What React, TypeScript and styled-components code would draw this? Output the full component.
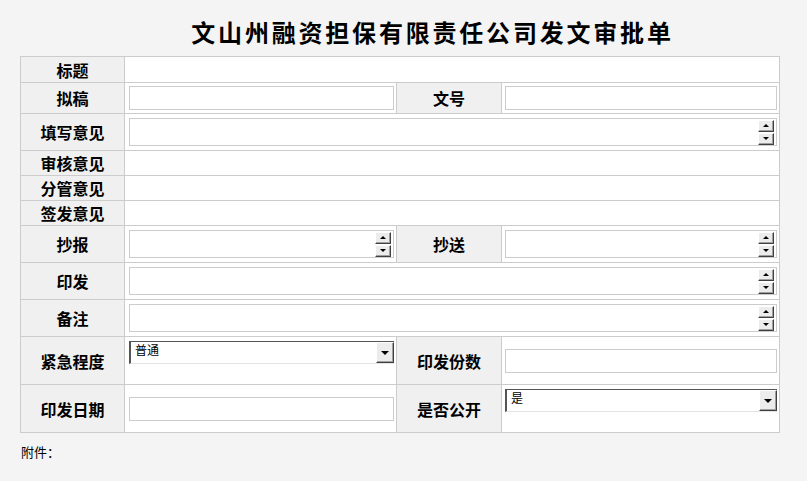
import styled, { createGlobalStyle } from "styled-components";

const GlobalStyle = createGlobalStyle`
  html, body {
    margin: 0;
    padding: 0;
    background: #f4f4f4;
  }
  body {
    font-family: "Liberation Sans", "Noto Sans CJK SC", sans-serif;
    color: #000;
  }
`;

const Page = styled.div`
  width: 807px;
  min-height: 481px;
  background: #f4f4f4;
  box-sizing: border-box;
`;

const Title = styled.h1`
  margin: 0;
  padding: 14px 0 0 58px;
  height: 56px;
  box-sizing: border-box;
  text-align: center;
  font-family: "Noto Sans CJK SC", sans-serif;
  font-size: 24px;
  line-height: 36px;
  font-weight: 700;
  letter-spacing: 2.8px;
`;

const Sheet = styled.div`
  margin-left: 20px;
  width: 760px;
  box-sizing: border-box;
  display: grid;
  grid-template-columns: 104px 272px 105px 278px;
  grid-template-rows: 26px 31px 37px 25px 25px 25px 37px 37px 37px 48px 48px;
  border-top: 1px solid #cccccc;
  border-left: 1px solid #cccccc;
`;

const Cell = styled.div<{ $span?: number; $top?: boolean; $right?: boolean }>`
  box-sizing: border-box;
  display: flex;
  align-items: ${(p) => (p.$top ? "flex-start" : "center")};
  grid-column: span ${(p) => p.$span ?? 1};
  border-right: 1px solid #cccccc;
  border-bottom: 1px solid #cccccc;
  background: #ffffff;
  padding: ${(p) => (p.$top ? "4px" : "0")} 2px 0 ${(p) => (p.$right ? "3px" : "4px")};
  min-width: 0;
`;

const Label = styled.div`
  box-sizing: border-box;
  display: flex;
  align-items: center;
  justify-content: center;
  border-right: 1px solid #cccccc;
  border-bottom: 1px solid #cccccc;
  background: #f0f0f0;
  font-family: "Noto Sans CJK SC", sans-serif;
  font-size: 16px;
  font-weight: 700;
`;

const TextInput = styled.input`
  box-sizing: border-box;
  width: 100%;
  height: 24px;
  margin: 0;
  padding: 0 3px;
  border: 1px solid #cccccc;
  background: #ffffff;
  outline: none;
`;

const MemoBox = styled.div`
  box-sizing: border-box;
  width: 100%;
  height: 28px;
  display: flex;
  align-items: center;
  border: 1px solid #cccccc;
  background: #ffffff;
  padding-right: 2px;
`;

const Memo = styled.textarea`
  flex: 1;
  height: 100%;
  border: none;
  resize: none;
  outline: none;
  padding: 0;
  background: transparent;
`;

const SpinColumn = styled.div`
  display: flex;
  flex-direction: column;
  gap: 1px;
`;

const Raised = styled.div`
  box-sizing: border-box;
  display: flex;
  align-items: center;
  justify-content: center;
  background: #ececec;
  border-top: 1px solid #ffffff;
  border-left: 1px solid #ffffff;
  border-right: 1px solid #404040;
  border-bottom: 1px solid #404040;
  box-shadow: inset -1px -1px 0 #a0a0a0;
`;

const SpinButton = styled(Raised)`
  width: 16px;
  height: 12px;
`;

const Arrow = styled.span<{ $up?: boolean; $half: number; $tall: number }>`
  width: 0;
  height: 0;
  border-left: ${(p) => p.$half}px solid transparent;
  border-right: ${(p) => p.$half}px solid transparent;
  ${(p) =>
    p.$up
      ? `border-bottom: ${p.$tall}px solid #000;`
      : `border-top: ${p.$tall}px solid #000;`}
`;

const SelectBox = styled.div`
  box-sizing: border-box;
  width: 100%;
  height: 23px;
  display: flex;
  align-items: stretch;
  background: #ffffff;
  border-top: 1px solid #555555;
  border-left: 2px solid #555555;
  border-bottom: 1px solid #e4e4e4;
`;

const SelectValue = styled.span`
  flex: 1;
  padding: 0 0 0 4px;
  font-family: "Noto Sans CJK SC", sans-serif;
  font-size: 12px;
  line-height: 15px;
`;

const DropButton = styled(Raised)`
  width: 18px;
  height: 21px;
`;

const Note = styled.div`
  padding: 10px 0 0 21px;
  font-family: "Noto Sans CJK SC", sans-serif;
  font-size: 13px;
  line-height: 18px;
`;

const Spin = () => (
  <SpinColumn>
    <SpinButton>
      <Arrow $up $half={3} $tall={3} />
    </SpinButton>
    <SpinButton>
      <Arrow $half={3} $tall={3} />
    </SpinButton>
  </SpinColumn>
);

const MemoField = () => (
  <MemoBox>
    <Memo />
    <Spin />
  </MemoBox>
);

const Select = ({ value }: { value: string }) => (
  <SelectBox>
    <SelectValue>{value}</SelectValue>
    <DropButton>
      <Arrow $half={4} $tall={4} />
    </DropButton>
  </SelectBox>
);

export default function App() {
  return (
    <Page>
      <GlobalStyle />
      <Title>文山州融资担保有限责任公司发文审批单</Title>
      <Sheet>
        <Label>标题</Label>
        <Cell $span={3} />

        <Label>拟稿</Label>
        <Cell>
          <TextInput />
        </Cell>
        <Label>文号</Label>
        <Cell $right>
          <TextInput />
        </Cell>

        <Label>填写意见</Label>
        <Cell $span={3}>
          <MemoField />
        </Cell>

        <Label>审核意见</Label>
        <Cell $span={3} />
        <Label>分管意见</Label>
        <Cell $span={3} />
        <Label>签发意见</Label>
        <Cell $span={3} />

        <Label>抄报</Label>
        <Cell>
          <MemoField />
        </Cell>
        <Label>抄送</Label>
        <Cell $right>
          <MemoField />
        </Cell>

        <Label>印发</Label>
        <Cell $span={3}>
          <MemoField />
        </Cell>

        <Label>备注</Label>
        <Cell $span={3}>
          <MemoField />
        </Cell>

        <Label>紧急程度</Label>
        <Cell $top>
          <Select value="普通" />
        </Cell>
        <Label>印发份数</Label>
        <Cell $right>
          <TextInput />
        </Cell>

        <Label>印发日期</Label>
        <Cell>
          <TextInput />
        </Cell>
        <Label>是否公开</Label>
        <Cell $top $right>
          <Select value="是" />
        </Cell>
      </Sheet>
      <Note>附件：</Note>
    </Page>
  );
}
